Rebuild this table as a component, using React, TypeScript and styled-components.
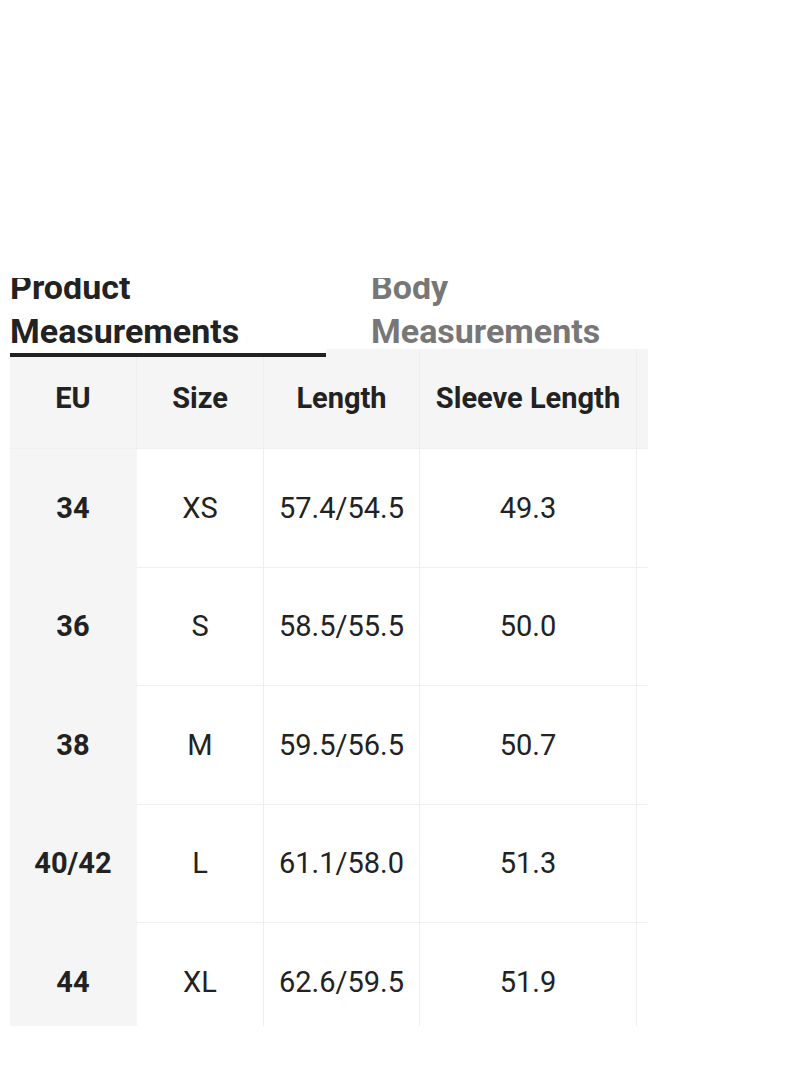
import React from "react";
import styled, { createGlobalStyle } from "styled-components";

const GlobalStyle = createGlobalStyle`
  html, body {
    margin: 0;
    padding: 0;
    background: #ffffff;
  }
  body {
    font-family: Roboto, "Noto Sans", "Liberation Sans", sans-serif;
    color: #222222;
  }
`;

const Page = styled.div`
  padding: 278px 0 0 10px;
  width: 800px;
  box-sizing: border-box;
`;

const Viewport = styled.div`
  width: 638px;
  height: 748px;
  overflow: hidden;
`;

const TabBar = styled.div`
  display: grid;
  grid-template-columns: 361px 361px;
  margin-top: -13px;
  width: 722px;
`;

const Tab = styled.div<{ $active?: boolean }>`
  position: relative;
  z-index: 1;
  width: 316px;
  box-sizing: border-box;
  font-size: 34px;
  line-height: 44px;
  font-weight: 700;
  color: ${(p) => (p.$active ? "#222222" : "#777777")};
  background: ${(p) => (p.$active ? "#ffffff" : "transparent")};
  border-bottom: 4px solid ${(p) => (p.$active ? "#222222" : "transparent")};
`;

const TabLabel = styled.span`
  display: block;
  max-width: 260px;
`;

const Grid = styled.div`
  display: grid;
  grid-template-columns: 127px 127px 156px 217px 180px;
  grid-template-rows: 100px;
  grid-auto-rows: 118.5px;
  margin-top: -8px;
  width: max-content;
`;

const Cell = styled.div<{ $head?: boolean; $first?: boolean }>`
  display: flex;
  align-items: center;
  justify-content: center;
  box-sizing: border-box;
  padding-bottom: ${(p) => (p.$head ? "2px" : "0")};
  font-size: 29px;
  font-weight: ${(p) => (p.$head || p.$first ? 700 : 400)};
  color: #222222;
  background: ${(p) => (p.$head || p.$first ? "#f5f5f5" : "#ffffff")};
  border-right: 1px solid ${(p) => (p.$first ? "#f5f5f5" : "#eeeeee")};
  border-bottom: 1px solid ${(p) => (p.$first ? "#f5f5f5" : "#f0f0f0")};
  white-space: nowrap;
`;

const headers = ["EU", "Size", "Length", "Sleeve Length", ""];
const rows = [
  ["34", "XS", "57.4/54.5", "49.3", ""],
  ["36", "S", "58.5/55.5", "50.0", ""],
  ["38", "M", "59.5/56.5", "50.7", ""],
  ["40/42", "L", "61.1/58.0", "51.3", ""],
  ["44", "XL", "62.6/59.5", "51.9", ""],
];

export default function App() {
  return (
    <>
      <GlobalStyle />
      <Page>
        <Viewport>
          <TabBar>
            <Tab $active>
              <TabLabel>Product Measurements</TabLabel>
            </Tab>
            <Tab>
              <TabLabel>Body Measurements</TabLabel>
            </Tab>
          </TabBar>
          <Grid>
            {headers.map((h, i) => (
              <Cell key={"h" + i} $head>
                {h}
              </Cell>
            ))}
            {rows.map((r, ri) =>
              r.map((v, ci) => (
                <Cell key={ri + "-" + ci} $first={ci === 0}>
                  {v}
                </Cell>
              ))
            )}
          </Grid>
        </Viewport>
      </Page>
    </>
  );
}
